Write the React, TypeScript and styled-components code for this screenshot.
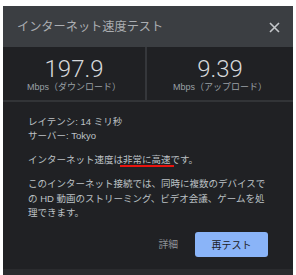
import React from 'react';
import styled, { createGlobalStyle } from 'styled-components';

const GlobalStyle = createGlobalStyle`
  body {
    margin: 0;
    background: #ffffff;
    font-family: 'Liberation Sans', 'Noto Sans CJK JP', sans-serif;
  }
`;

function CloseIcon() {
  return (
    <svg width='11' height='11' viewBox='0 0 11 11'>
      <path d='M1 1 L10 10 M10 1 L1 10' stroke='#c4c7ca' strokeWidth='1.6' />
    </svg>
  );
}

export default function App() {
  return (
    <>
      <GlobalStyle />
      <Panel>
        <Header>
          <Title>インターネット速度テスト</Title>
          <CloseButton>
            <CloseIcon />
          </CloseButton>
        </Header>
        <Stats>
          <Stat divider>
            <Value>197.9</Value>
            <Unit>Mbps（ダウンロード）</Unit>
          </Stat>
          <Stat>
            <Value>9.39</Value>
            <Unit>Mbps（アップロード）</Unit>
          </Stat>
        </Stats>
        <Body>
          <Para>
            レイテンシ: 14 ミリ秒
            <br />
            サーバー: Tokyo
          </Para>
          <Para>
            インターネット速度は<Marked>非常に高速</Marked>です。
          </Para>
          <Para wide>
            このインターネット接続では、同時に複数のデバイスで
            <br />
            の HD 動画のストリーミング、ビデオ会議、ゲームを処
            <br />
            理できます。
          </Para>
        </Body>
        <Footer>
          <TextButton>詳細</TextButton>
          <PrimaryButton>再テスト</PrimaryButton>
        </Footer>
        <BottomStrip />
      </Panel>
    </>
  );
}

const Panel = styled.div`
  margin: 6px 0 0 3px;
  width: 290px;
  background: #202124;
  overflow: hidden;
`;

const Header = styled.div`
  height: 41px;
  background: #3b3e42;
  display: flex;
  align-items: center;
  justify-content: space-between;
  padding: 0 13px 0 14px;
`;

const Title = styled.div`
  font-size: 12.2px;
  color: #abaeb2;
  line-height: 1;
  padding-top: 1px;
`;

const CloseButton = styled.div`
  display: flex;
  align-items: center;
  padding-top: 1px;
`;

const Stats = styled.div`
  display: grid;
  grid-template-columns: 144px 1fr;
  height: 53px;
  border-bottom: 2px solid #323437;
`;

const Stat = styled.div<{ divider?: boolean }>`
  display: flex;
  flex-direction: column;
  align-items: center;
  justify-content: center;
  padding-top: 1px;
  border-right: ${(p) => (p.divider ? '2px solid #35373b' : 'none')};
`;

const Value = styled.div`
  font-family: 'Roboto', 'Liberation Sans', sans-serif;
  font-weight: 300;
  font-size: 24px;
  line-height: 24px;
  color: #d6d8db;
`;

const Unit = styled.div`
  font-size: 9px;
  line-height: 10px;
  color: #9aa0a6;
  margin-top: 1px;
`;

const Body = styled.div`
  padding: 13px 0 0 25px;
`;

const Para = styled.p<{ wide?: boolean }>`
  margin: 0 0 10px;
  font-size: 9.5px;
  line-height: ${(p) => (p.wide ? '14.5px' : '14px')};
  color: #bdc1c6;
  white-space: nowrap;
`;

const Marked = styled.span`
  padding: 0 3px;
  margin: 0 -3px;
  border-bottom: 2px solid #e8140f;
`;

const Footer = styled.div`
  display: flex;
  justify-content: flex-end;
  align-items: center;
  gap: 17px;
  padding: 1px 25px 12px 0;
`;

const TextButton = styled.div`
  font-size: 9.8px;
  color: #8e9297;
`;

const PrimaryButton = styled.div`
  width: 73px;
  height: 25px;
  border-radius: 3px;
  background: #8ab4f8;
  color: #202124;
  font-size: 10px;
  display: flex;
  align-items: center;
  justify-content: center;
`;

const BottomStrip = styled.div`
  height: 10px;
  background: #2a2b2e;
`;
